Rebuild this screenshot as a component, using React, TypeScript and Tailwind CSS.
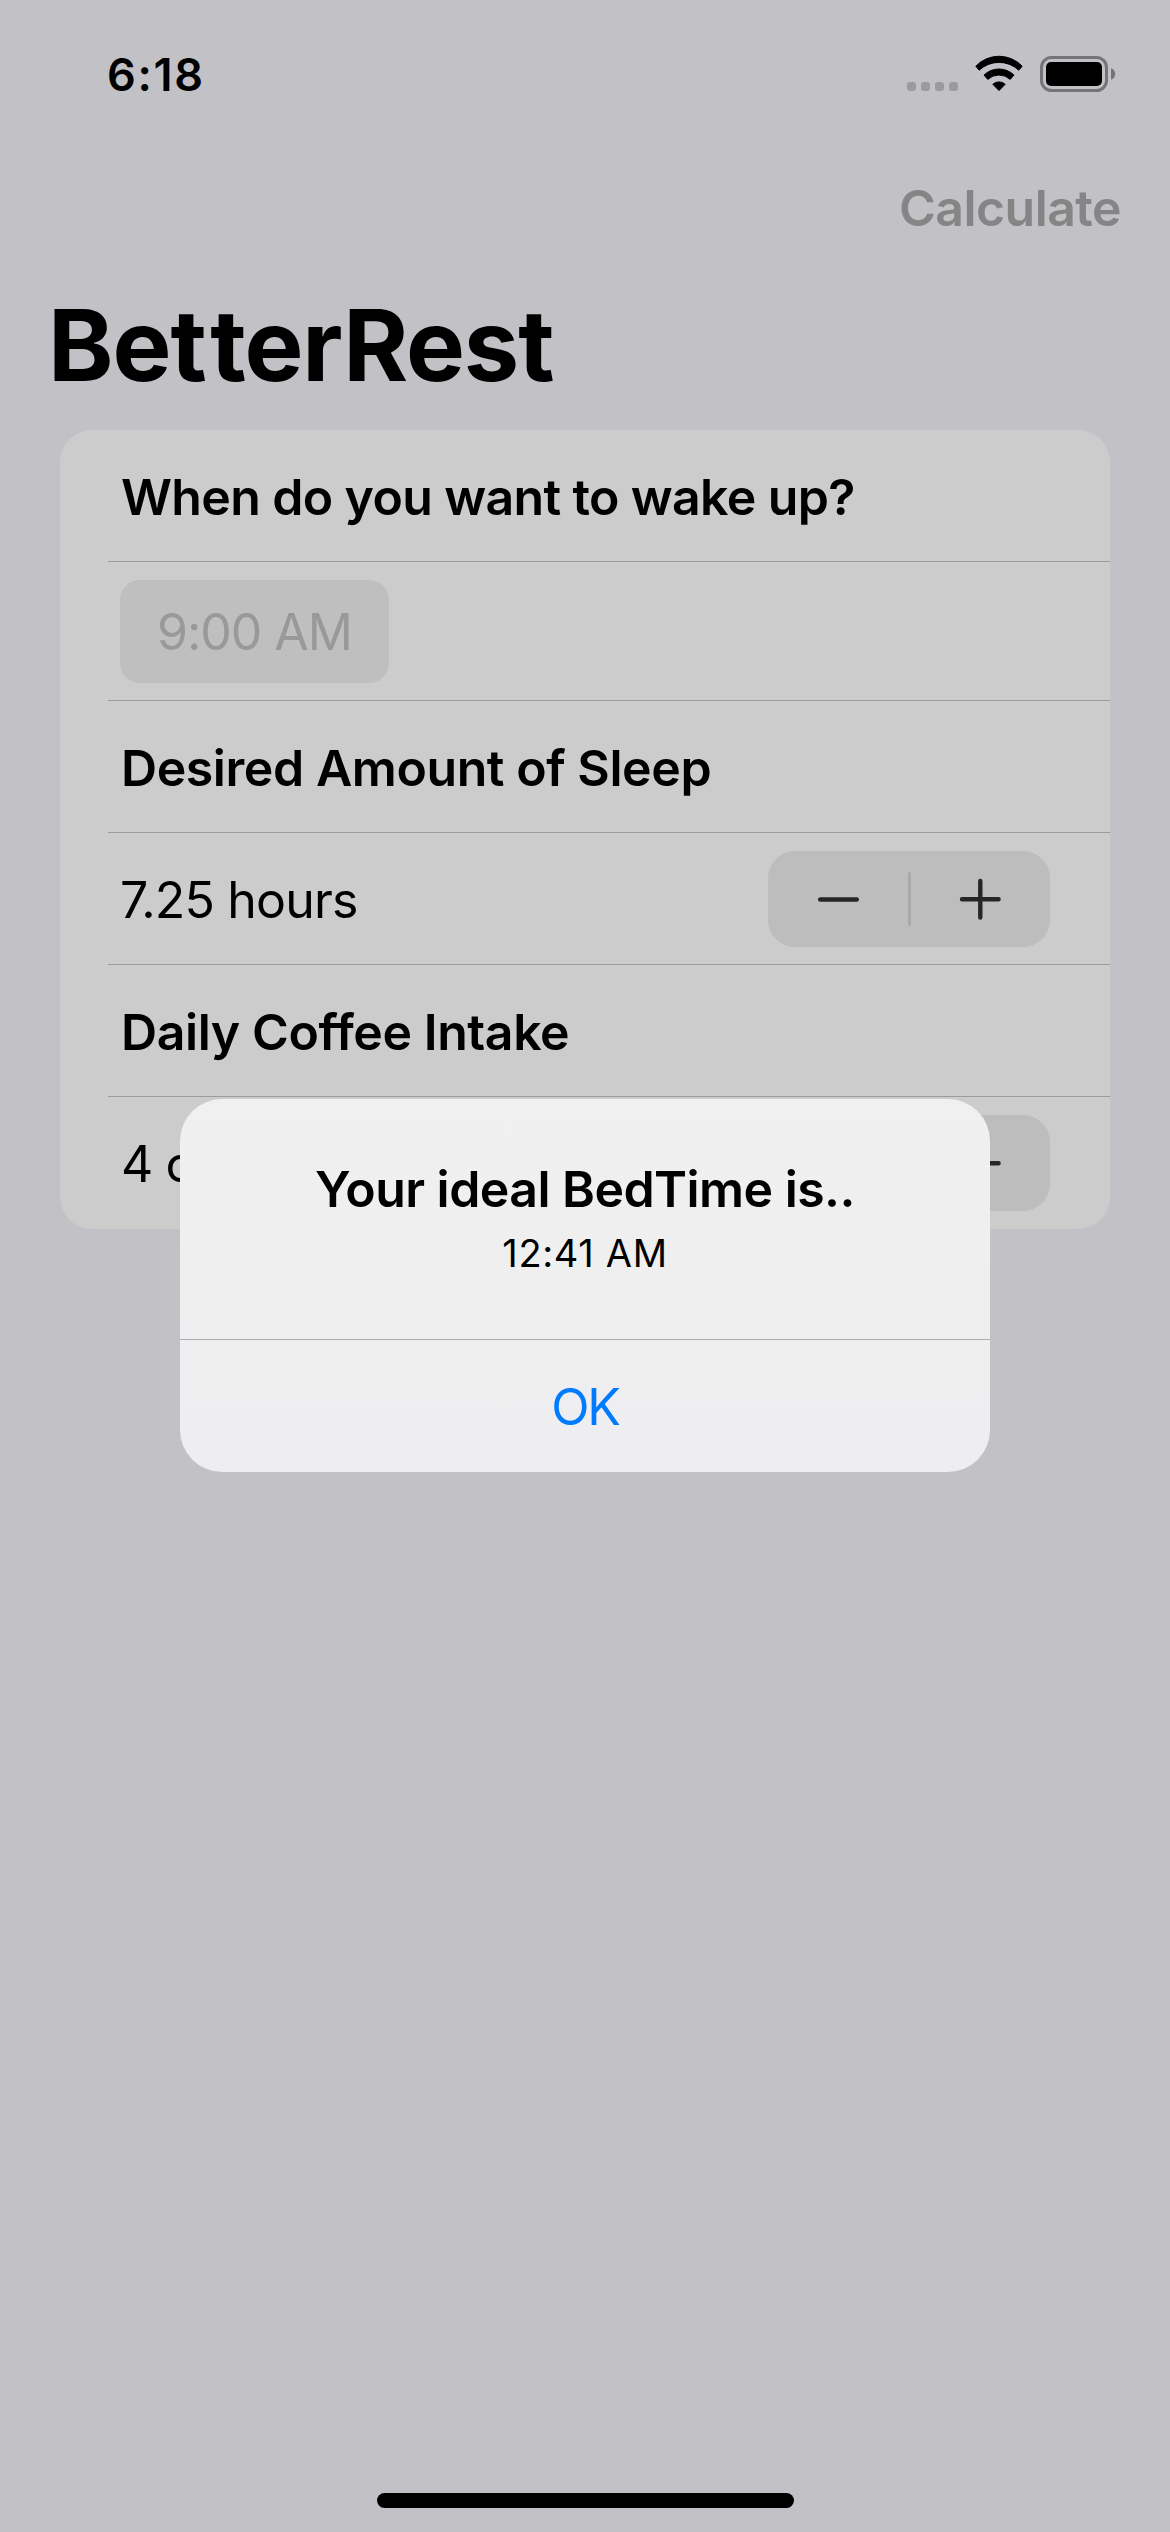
import type { ReactNode } from "react";

function WifiIcon() {
  return (
    <svg width="48" height="36" viewBox="0 0 48 36" fill="#000" stroke="#000" strokeWidth="1" strokeLinejoin="round">
      <path d="M.8 10.9A32 32 0 0 1 47.2 10.9L43.8 14.9A29 29 0 0 0 4.2 14.9Z M9 19.8A21.5 21.5 0 0 1 39 19.8L35.2 24.1A16.5 16.5 0 0 0 12.8 24.1Z M17.8 28.9A9.5 9.5 0 0 1 30.2 28.9L24 35.3Z" transform="translate(0 .3)" />
    </svg>
  );
}

function BatteryIcon() {
  return (
    <svg width="76" height="36" viewBox="0 0 76 36">
      <rect x="1.5" y="1.5" width="65" height="33" rx="10" fill="none" stroke="#757478" strokeWidth="3" />
      <rect x="6" y="6" width="56" height="24" rx="5" fill="#000" />
      <path d="M71 12.2c2.4.6 4.2 3 4.2 5.8s-1.8 5.2-4.2 5.8Z" fill="#757478" />
    </svg>
  );
}

function StatusBar() {
  return (
    <div className="flex h-[132px] items-start justify-between pl-[107px] pr-[54px]">
      <span className="mt-12 text-[45px] font-semibold leading-[54px] tracking-[1.7px]">6:18</span>
      <div className="mt-[55px] flex items-start">
        <div className="mt-[27px] mr-[17px] flex gap-[5px]">
          {[0, 1, 2, 3].map((i) => (
            <span key={i} className="h-[9px] w-[9px] rounded-[3px] bg-[#9b9a9e]" />
          ))}
        </div>
        <WifiIcon />
        <div className="ml-[17px] mt-px">
          <BatteryIcon />
        </div>
      </div>
    </div>
  );
}

function Row({ children, tall }: { children: ReactNode; tall?: boolean }) {
  return (
    <div
      className={`flex items-center justify-between border-b border-[#9c9c9d] pl-3 pr-[60px] pt-px last:border-b-0 last:pt-0 ${
        tall ? "h-[139px]" : "h-[132px]"
      }`}
    >
      {children}
    </div>
  );
}

function Stepper() {
  return (
    <div className="flex h-24 w-[282px] items-center rounded-[27px] bg-[#bdbdbd]">
      <div className="flex flex-1 justify-center">
        <svg width="42" height="42" viewBox="0 0 42 42" stroke="#262626" strokeWidth="4.4" strokeLinecap="round">
          <path d="M3.2 21.5h36.6" />
        </svg>
      </div>
      <span className="h-[54px] w-[3px] rounded-full bg-[#a9a9a9]" />
      <div className="flex flex-1 justify-center">
        <svg width="42" height="42" viewBox="0 0 42 42" stroke="#262626" strokeWidth="4.4" strokeLinecap="round">
          <path d="M3 21.2h36.6M21.3 2.9v36.6" />
        </svg>
      </div>
    </div>
  );
}

export default function App() {
  return (
    <div className="relative flex h-[2532px] w-[1170px] flex-col overflow-hidden bg-[#c2c1c6] font-['Inter',sans-serif] text-black">
      <StatusBar />

      <div className="flex h-[132px] justify-end pr-[49px] pt-5">
        <span className="text-[50px] font-semibold leading-[112px] tracking-[-0.54px] text-[#858585]">Calculate</span>
      </div>

      <div className="flex h-[166px] items-center pb-1 pl-12">
        <h1 className="text-[99px] font-bold leading-[120px] tracking-[-1.05px]">
          Be<span className="tracking-[3.5px]">t</span>terRest
        </h1>
      </div>

      <div className="mx-[60px] rounded-[32px] bg-[#cccccc] pl-12 text-[50px]">
        <Row>
          <span className="pl-px pt-0.5 font-semibold tracking-[-0.63px]">When do you want to wake up?</span>
        </Row>
        <Row tall>
          <div className="flex h-[103px] w-[269px] items-center rounded-[20px] bg-[#bfbfbf] pl-[37px] tracking-[-1.06px] text-[#999999]">
            <span className="whitespace-nowrap pt-0.5">9:00 AM</span>
          </div>
        </Row>
        <Row>
          <span className="pl-px pt-0.5 font-semibold tracking-[-0.43px]">Desired Amount of Sleep</span>
        </Row>
        <Row>
          <span className="pt-0.5 tracking-[-0.82px]">7.25 hours</span>
          <Stepper />
        </Row>
        <Row>
          <span className="pl-px pt-0.5 font-semibold tracking-[-0.41px]">Daily Coffee Intake</span>
        </Row>
        <Row>
          <span className="pl-px pt-0.5 tracking-[-0.9px]">4 cups</span>
          <Stepper />
        </Row>
      </div>

      <div className="mx-auto mt-auto mb-6 h-[15px] w-[417px] rounded-full bg-black" />

      <div className="absolute inset-0 flex items-center justify-center pt-[39px]">
        <div
          role="alertdialog"
          className="flex h-[373px] w-[810px] flex-col overflow-hidden rounded-[42px] bg-linear-to-b from-[#f0f0f0] to-[#eeeef0] text-center"
        >
          <div className="h-60 pt-[59px]">
            <h2 className="text-[50px] font-semibold leading-[62px] tracking-[-0.55px]">Your ideal BedTime is..</h2>
            <p className="mt-[9px] text-[38px] leading-[48px] tracking-[0.66px]">12:41 AM</p>
          </div>
          <button className="flex-1 border-t border-[#adadaf] pt-0.5 text-[50px] leading-none tracking-[-2.2px] text-[#007aff]">
            OK
          </button>
        </div>
      </div>
    </div>
  );
}
